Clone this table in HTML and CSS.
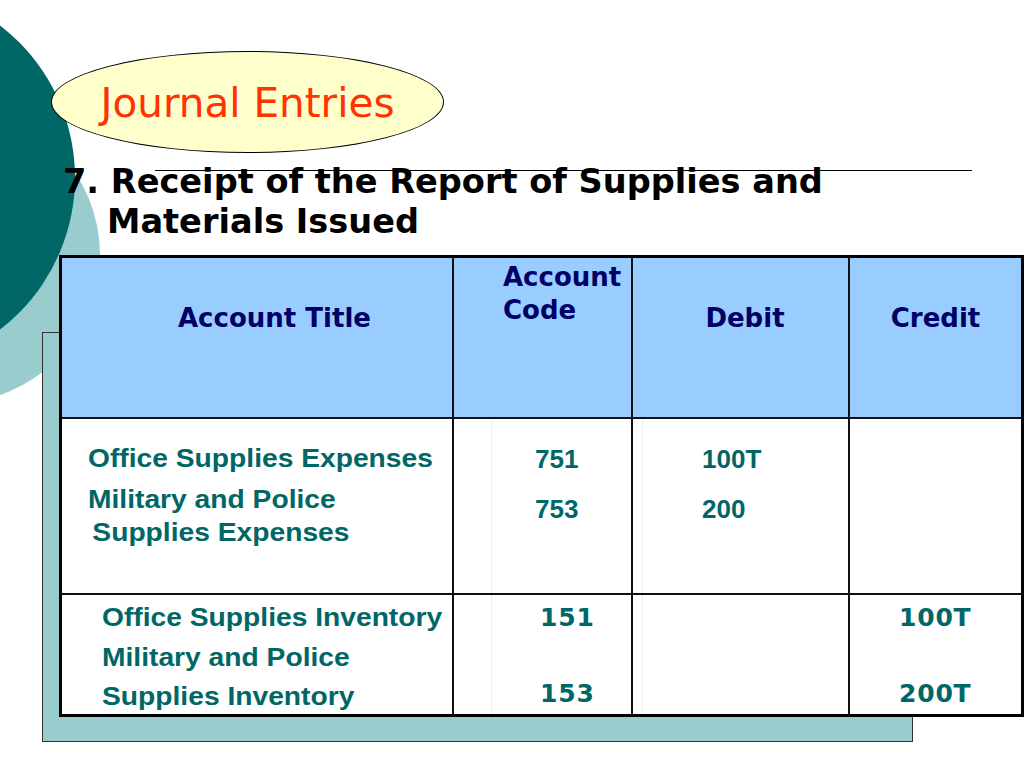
FILE: index.html
```html
<!DOCTYPE html>
<html lang="en">
<head>
<meta charset="utf-8">
<title>Journal Entries</title>
<link rel="stylesheet" href="styles.css">
</head>
<body>
<div class="slide">
  <div class="circle circle-light"></div>
  <div class="circle circle-dark"></div>
  <div class="shadow"></div>

  <div class="title-oval"><span class="title">Journal Entries</span></div>
  <div class="rule"></div>
  <h1 class="heading">7. Receipt of the Report of Supplies and<br>Materials Issued</h1>

  <div class="journal">
    <div class="cell head head-title">Account Title</div>
    <div class="cell head head-code">Account<br>Code</div>
    <div class="cell head head-debit">Debit</div>
    <div class="cell head head-credit no-right">Credit</div>

    <div class="cell acct acct-1">
      <span class="line first">Office Supplies Expenses</span>
      <span class="line">Military and Police</span>
      <span class="line nudge">Supplies Expenses</span>
    </div>
    <div class="cell num num-1 code-col code-1">
      <div>751</div>
      <div>753</div>
    </div>
    <div class="cell num num-1 debit-col debit-1">
      <div>100T</div>
      <div>200</div>
    </div>
    <div class="cell no-right"></div>

    <div class="cell acct acct-2 no-bottom">
      <span class="line nudge-1">Office Supplies Inventory</span>
      <span class="line">Military and Police</span>
      <span class="line last">Supplies Inventory</span>
    </div>
    <div class="cell num-2 code-col code-2 no-bottom">
      <div>151</div>
      <div class="second">153</div>
    </div>
    <div class="cell debit-col no-bottom"></div>
    <div class="cell num-2 credit-2 no-right no-bottom">
      <div>100T</div>
      <div class="second">200T</div>
    </div>
  </div>
</div>
</body>
</html>
```

FILE: styles.css
```css
html, body {
  margin: 0;
  padding: 0;
  background: #ffffff;
}

.slide {
  position: relative;
  z-index: 0;
  display: flow-root;
  width: 1024px;
  height: 768px;
  overflow: hidden;
  background: #ffffff;
  font-family: "DejaVu Sans", Verdana, sans-serif;
}

/* decorative background shapes */
.circle {
  position: absolute;
  z-index: -1;
  border-radius: 50%;
}

.circle-dark {
  left: -308px;
  top: -14px;
  width: 383px;
  height: 383px;
  background: #006666;
}

.circle-light {
  left: -196px;
  top: 107px;
  width: 296px;
  height: 296px;
  background: #99cccc;
}

.shadow {
  position: absolute;
  z-index: -1;
  left: 42px;
  top: 332px;
  width: 871px;
  height: 410px;
  box-sizing: border-box;
  background: #99cccc;
  border: 1px solid #333333;
}

/* title */
.title-oval {
  box-sizing: border-box;
  width: 393px;
  height: 102px;
  margin: 51px 0 0 51px;
  padding-top: 2px;
  border: 1px solid #000000;
  border-radius: 50%;
  background: #ffffcc;
  display: flex;
  align-items: center;
  justify-content: center;
}

.title {
  font-family: "DejaVu Sans", Verdana, sans-serif;
  font-size: 40.5px;
  font-weight: normal;
  color: #ff3300;
  white-space: nowrap;
}

.rule {
  width: 817px;
  height: 1px;
  margin: 17px 0 0 155px;
  background: #000000;
}

.heading {
  margin: -9px 0 0 63px;
  padding-left: 44px;
  text-indent: -44px;
  font-family: "DejaVu Sans", Verdana, sans-serif;
  font-size: 33.6px;
  font-weight: bold;
  line-height: 40px;
  color: #000000;
  white-space: nowrap;
}

/* journal table */
.journal {
  box-sizing: border-box;
  width: 965px;
  margin: 13px 0 0 59px;
  display: grid;
  grid-template-columns: 392px 179px 217px 171px;
  grid-template-rows: 161px 176px 119px;
  border: 3px solid #000000;
  background: #ffffff;
}

.cell {
  box-sizing: border-box;
  border-right: 2px solid #111111;
  border-bottom: 2px solid #111111;
  white-space: nowrap;
}

.no-right {
  border-right: none;
}

.no-bottom {
  border-bottom: none;
}

.head {
  background: #99ccff;
  font-family: "DejaVu Sans", Verdana, sans-serif;
  font-size: 26px;
  font-weight: bold;
  line-height: 33px;
  color: #000066;
}

.head-title {
  padding: 44px 0 0 116px;
}

.head-code {
  padding: 3px 0 0 49px;
}

.head-debit {
  padding: 44px 0 0 9px;
  text-align: center;
}

.head-credit {
  padding-top: 44px;
  text-align: center;
}

/* account titles */
.acct {
  font-family: "Liberation Sans", Arial, sans-serif;
  font-size: 26px;
  font-weight: bold;
  color: #006666;
}

.acct .line {
  display: block;
  transform: scaleX(1.085);
  transform-origin: 0 0;
}

.acct-1 {
  padding: 23px 0 0 26px;
  line-height: 33px;
}

.acct-1 .first {
  margin-bottom: 8px;
}

.acct-1 .nudge {
  padding-left: 4px;
}

.acct-2 {
  padding: 2px 0 0 40px;
  line-height: 40px;
}

.acct-2 .nudge-1 {
  padding-left: 0;
}

.acct-2 .last {
  margin-top: -1px;
}

/* faint guide lines inside code / debit columns */
.code-col {
  background: linear-gradient(to right, transparent 37px, #ededed 37px, #ededed 38px, transparent 38px);
}

.debit-col {
  background: linear-gradient(to right, transparent 9px, #ededed 9px, #ededed 10px, transparent 10px);
}

/* amounts, first row */
.num-1 {
  font-family: "Liberation Sans", Arial, sans-serif;
  font-size: 26px;
  font-weight: bold;
  line-height: 50px;
  color: #006666;
  padding-top: 15px;
}

.code-1 {
  padding-left: 81px;
}

.debit-1 {
  padding-left: 69px;
}

/* amounts, second row */
.num-2 {
  font-family: "DejaVu Sans", Verdana, sans-serif;
  font-size: 25px;
  font-weight: bold;
  letter-spacing: 0.8px;
  line-height: 38px;
  color: #006666;
  padding-top: 4px;
}

.num-2 .second {
  margin-top: 38px;
}

.code-2 {
  padding-left: 86px;
}

.credit-2 {
  padding-left: 49px;
}
```
